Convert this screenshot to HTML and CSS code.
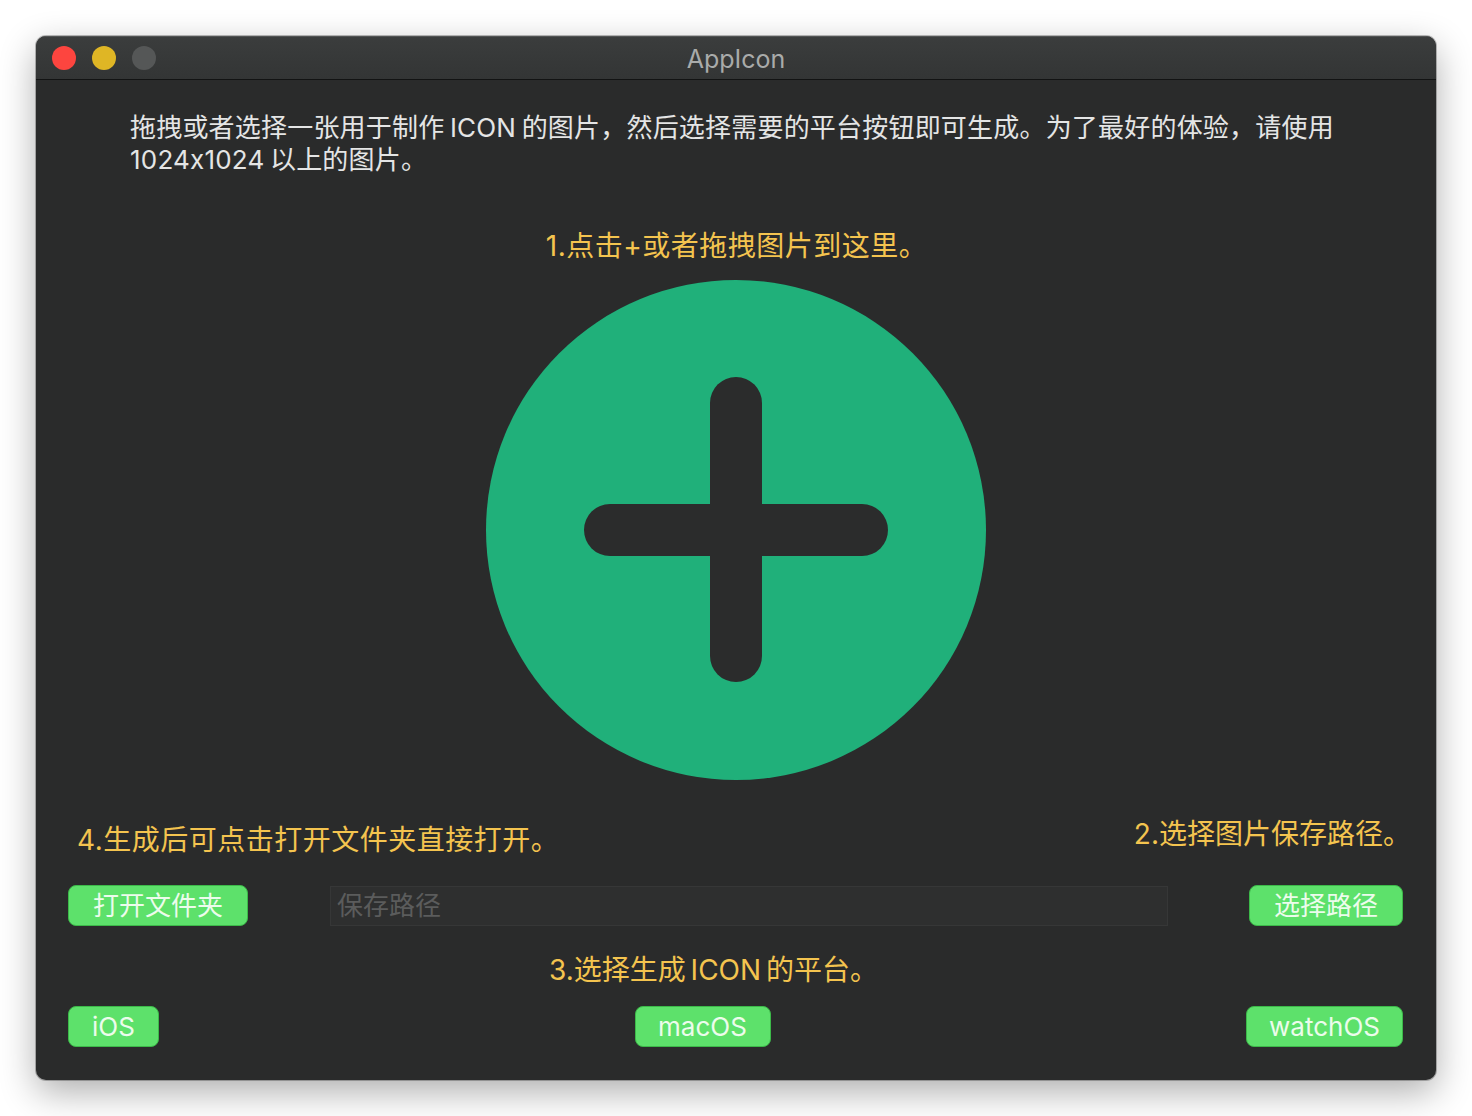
FILE: index.html
```html
<!DOCTYPE html>
<html lang="zh-CN">
<head>
<meta charset="utf-8">
<title>AppIcon</title>
<link rel="stylesheet" href="styles.css">
</head>
<body>
<div class="window">
  <div class="titlebar">
    <div class="lights">
      <span class="light red"></span>
      <span class="light yellow"></span>
      <span class="light gray"></span>
    </div>
    <div class="title">AppIcon</div>
  </div>
  <div class="content">
    <p class="intro">拖拽或者选择一张用于制作 ICON 的图片，然后选择需要的平台按钮即可生成。为了最好的体验，请使用 1024x1024 以上的图片。</p>
    <div class="step step1">1.点击+或者拖拽图片到这里。</div>
    <div class="drop">
      <svg width="500" height="500" viewBox="0 0 500 500">
        <circle cx="250" cy="250" r="250" fill="#20b07a"/>
        <line x1="250" y1="123" x2="250" y2="376" stroke="#2b2c2c" stroke-width="52" stroke-linecap="round"/>
        <line x1="124" y1="250" x2="376" y2="250" stroke="#2b2c2c" stroke-width="52" stroke-linecap="round"/>
      </svg>
    </div>
    <div class="labels">
      <div class="step step4">4.生成后可点击打开文件夹直接打开。</div>
      <div class="step step2">2.选择图片保存路径。</div>
    </div>
    <div class="pathrow">
      <button class="btn btn-open">打开文件夹</button>
      <div class="path">保存路径</div>
      <button class="btn btn-choose">选择路径</button>
    </div>
    <div class="step step3">3.选择生成 ICON 的平台。</div>
    <div class="platforms">
      <button class="btn btn-ios">iOS</button>
      <button class="btn btn-mac">macOS</button>
      <button class="btn btn-watch">watchOS</button>
    </div>
  </div>
</div>
</body>
</html>
```
FILE: styles.css
```css
html, body {
  margin: 0;
  padding: 0;
}
body {
  background: #ffffff;
  padding: 36px;
  width: 1400px;
  font-family: "Inter", "Noto Sans CJK SC", sans-serif;
}
.window {
  width: 1400px;
  height: 1044px;
  border-radius: 10px;
  background: #2a2b2b;
  box-shadow: 0 0 0 1px rgba(0,0,0,0.25), 0 12px 36px rgba(0,0,0,0.32);
  overflow: hidden;
  display: flex;
  flex-direction: column;
}
.titlebar {
  height: 43px;
  border-bottom: 1px solid #121313;
  background: linear-gradient(#3b3d3d, #333535);
  box-shadow: inset 0 1px 0 rgba(255,255,255,0.12);
  display: flex;
  align-items: center;
  position: relative;
}
.lights {
  display: flex;
  gap: 16px;
  padding-left: 16px;
  padding-top: 1px;
}
.light {
  width: 24px;
  height: 24px;
  border-radius: 50%;
  display: block;
}
.red { background: #fd453f; }
.yellow { background: #dfb625; }
.gray { background: #555757; }
.title {
  position: absolute;
  left: 0;
  right: 0;
  top: 2px;
  text-align: center;
  color: #a9abaa;
  font-size: 25px;
  line-height: 43px;
}
.content {
  flex: 1;
  display: flex;
  flex-direction: column;
  padding: 0 33px 0 32px;
}
.intro {
  margin: 32px 0 0 62px;
  width: 1230px;
  color: #e4e5e5;
  font-size: 26px;
  line-height: 32px;
  letter-spacing: 0.2px;
  word-spacing: -2px;
}
.step {
  color: #f4c44f;
  font-size: 28px;
  line-height: 36px;
  letter-spacing: 0.5px;
}
.step1 {
  margin-top: 52px;
  text-align: center;
  padding-left: 2px;
  word-spacing: 2px;
}
.drop {
  margin-top: 16px;
  display: flex;
  justify-content: center;
  padding-left: 1px;
}
.drop svg { display: block; }
.labels {
  margin-top: 36px;
  display: flex;
  justify-content: space-between;
  align-items: flex-start;
}
.step4 {
  margin-top: 6px;
  padding-left: 9px;
}
.step2 {
  letter-spacing: 0;
  margin-right: -8px;
}
.pathrow {
  margin-top: 27px;
  display: flex;
  align-items: center;
}
.btn {
  height: 41px;
  box-sizing: border-box;
  border: 1.5px solid #3cb949;
  border-radius: 8px;
  background: #5de16b;
  color: #ecfcec;
  font-family: "Inter", "Noto Sans CJK SC", sans-serif;
  font-size: 26px;
  line-height: 36px;
  padding: 0;
  text-align: center;
}
.btn-open { width: 180px; }
.btn-choose { width: 154px; }
.path {
  flex: 1;
  margin: 0 81px 0 82px;
  height: 40px;
  box-sizing: border-box;
  background: #2e2f2f;
  border: 1px solid #363737;
  color: #5b5c5c;
  font-size: 26px;
  line-height: 38px;
  padding-left: 6px;
}
.step3 {
  margin-top: 26px;
  text-align: center;
  padding-right: 44px;
  letter-spacing: 0;
  word-spacing: -3px;
}
.platforms {
  margin-top: 18px;
  display: flex;
  justify-content: space-between;
}
.btn-ios { width: 91px; }
.btn-mac { width: 136px; }
.btn-watch { width: 157px; }
```
